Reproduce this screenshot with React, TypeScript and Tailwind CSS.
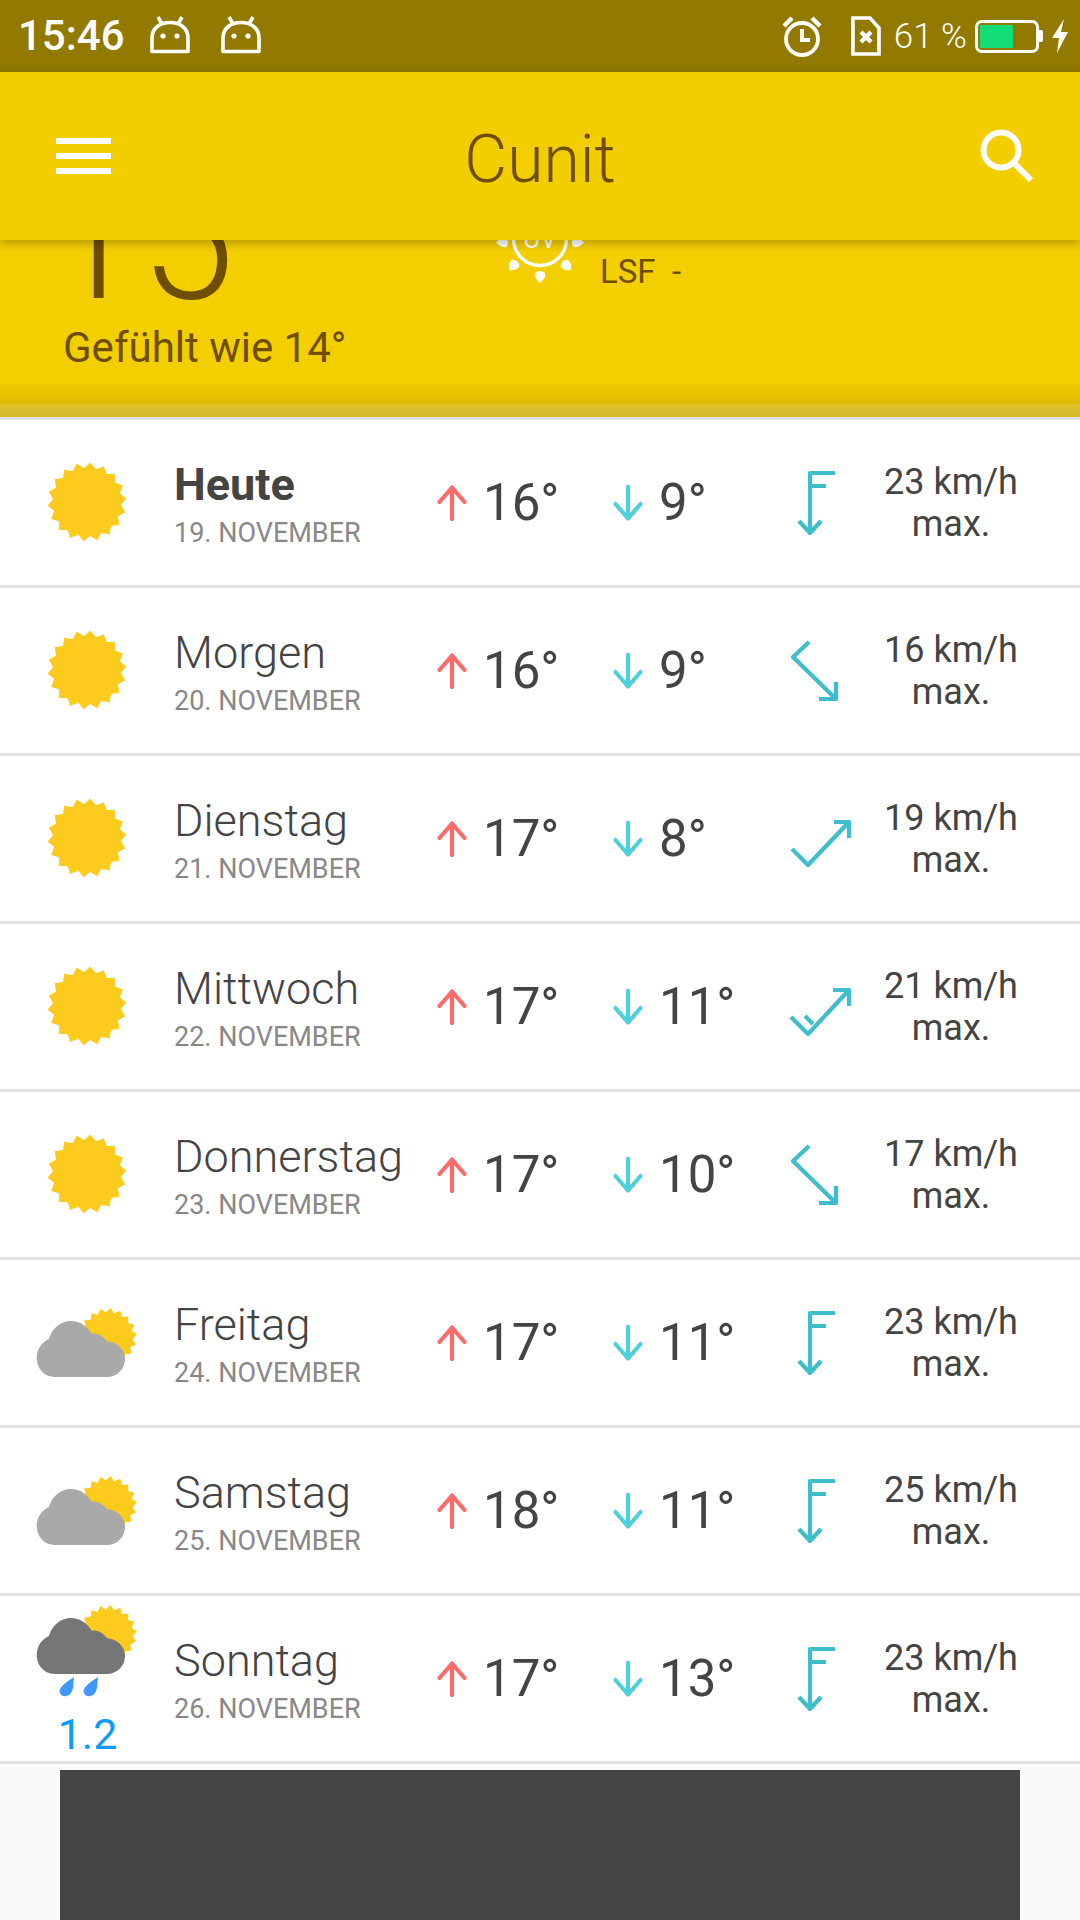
import React from 'react';

const SUN_RAYS = 18;

// spiky sun disc, centred on cx/cy
function sunPoints(cx: number, cy: number, outer: number, inner: number) {
  const pts: string[] = [];
  for (let i = 0; i < SUN_RAYS * 2; i++) {
    const r = i % 2 === 0 ? outer : inner;
    const a = ((-85 + (i * 180) / SUN_RAYS) * Math.PI) / 180;
    pts.push(`${(cx + r * Math.cos(a)).toFixed(1)},${(cy + r * Math.sin(a)).toFixed(1)}`);
  }
  return pts.join(' ');
}

const CLOUD = 'M55 84 C44 84 36.7 75 36.7 65 C36.7 56 42 49 49 46 C52 35 61 28 71 28 C80 28 87 33 91.7 40.7 C98 40 103 43 106.7 48 C117 49 125 56 125 66 C125 76 117 84 107 84 Z';

const CloudWithSun: React.FC<{ color: string; height: number; className?: string }> = ({ color, height, className }) => (
  <svg width="175" height={height} viewBox={`0 10 175 ${height}`} className={className}>
    <clipPath id="sun-cut">
      <rect x="0" y="0" width="175" height="68" />
    </clipPath>
    <polygon points={sunPoints(108, 44, 29, 24.5)} fill="#fdca1e" clipPath="url(#sun-cut)" />
    <path d={CLOUD} fill={color} />
  </svg>
);

const WeatherIcon: React.FC<{ kind: 'sun' | 'cloudy' | 'rain'; rain?: string }> = ({ kind, rain }) => {
  if (kind === 'sun') {
    return (
      <svg width="80" height="80" viewBox="0 0 80 80" className="ml-[47px] -mt-[2px]">
        <polygon points={sunPoints(40, 40, 39.5, 34)} fill="#fdca1e" />
      </svg>
    );
  }
  if (kind === 'cloudy') {
    return <CloudWithSun color="#a9a9a9" height={90} className="mt-[10px]" />;
  }
  return (
    <div className="h-[165px] pt-[4px] flex flex-col items-center">
      <CloudWithSun color="#757678" height={76} />
      <svg width="175" height="20" viewBox="0 0 175 20" className="mt-[1px] shrink-0">
        <path d="M74 0 C73 7 74 10 72 14 C70 20 62 21 60 16 C58 12 63 7 74 0 Z" fill="#3f97f6" />
        <path d="M98 0 C97 7 98 10 96 14 C94 20 86 21 84 16 C82 12 87 7 98 0 Z" fill="#3f97f6" />
      </svg>
      <span className="mt-[14px] text-[43px] leading-[46px] text-[#0d9bfb]">{rain}</span>
    </div>
  );
};

// temperature arrow
const TempArrow: React.FC<{ up?: boolean }> = ({ up }) => (
  <svg width="30" height="36" viewBox="0 0 30 36" fill="none" stroke={up ? '#fb6a68' : '#4fcfdc'} strokeWidth="4.2" strokeLinecap="round" strokeLinejoin="round" className="shrink-0">
    {up ? <path d="M15 34 V2.5 M2.5 17 L15 2.5 L27.5 17" /> : <path d="M15 2 V33.5 M2.5 19 L15 33.5 L27.5 19" />}
  </svg>
);

// wind barbs by direction, second tick on the stronger one
const WIND_BARBS: Record<string, React.ReactNode> = {
  south: <path d="M22 66 V5 H47 M22 18 H38 M11 53 L22 65 L33 53" />,
  southeast: <path d="M21 6 L5 21 L48 63 M48 46 V63 H31" />,
  northeast: <path d="M4 45 L20 61 L61 18 M46 18 H61 V34" />,
  northeastTick: <path d="M3 45 L20 62 L61 18 M45 18 H61 V34 M17 44 L25 52" />,
};

const WindIcon: React.FC<{ dir: string }> = ({ dir }) => (
  <svg width="70" height="70" viewBox="0 0 70 70" fill="none" stroke="#3ebdcb" strokeWidth="4.2" strokeLinejoin="round" className="shrink-0">
    {WIND_BARBS[dir]}
  </svg>
);

const days = [
  { name: 'Heute', date: '19. NOVEMBER', hi: '16°', lo: '9°', wind: '23 km/h', dir: 'south', icon: 'sun', bold: true },
  { name: 'Morgen', date: '20. NOVEMBER', hi: '16°', lo: '9°', wind: '16 km/h', dir: 'southeast', icon: 'sun' },
  { name: 'Dienstag', date: '21. NOVEMBER', hi: '17°', lo: '8°', wind: '19 km/h', dir: 'northeast', icon: 'sun' },
  { name: 'Mittwoch', date: '22. NOVEMBER', hi: '17°', lo: '11°', wind: '21 km/h', dir: 'northeastTick', icon: 'sun' },
  { name: 'Donnerstag', date: '23. NOVEMBER', hi: '17°', lo: '10°', wind: '17 km/h', dir: 'southeast', icon: 'sun' },
  { name: 'Freitag', date: '24. NOVEMBER', hi: '17°', lo: '11°', wind: '23 km/h', dir: 'south', icon: 'cloudy' },
  { name: 'Samstag', date: '25. NOVEMBER', hi: '18°', lo: '11°', wind: '25 km/h', dir: 'south', icon: 'cloudy' },
  { name: 'Sonntag', date: '26. NOVEMBER', hi: '17°', lo: '13°', wind: '23 km/h', dir: 'south', icon: 'rain', rain: '1.2' },
] as const;

const AndroidGlyph = () => (
  <svg width="40" height="38" viewBox="0 0 40 38" fill="none" stroke="#fff" strokeWidth="3.6" className="-mt-[3px]">
    <path d="M2 35.5 V22 C2 12 10 6.5 20 6.5 C30 6.5 38 12 38 22 V35.5 Z" strokeLinejoin="round" />
    <path d="M8 1 L12 8 M32 1 L28 8" />
    <circle cx="13" cy="20" r="2.6" fill="#fff" stroke="none" />
    <circle cx="27" cy="20" r="2.6" fill="#fff" stroke="none" />
  </svg>
);

// one petal of the UV sun, drawn at the bottom and turned round the disc
const UV_RAYS = [0, 45, -45, 85, -85];

export default function App() {
  return (
    <div className="w-[1080px] h-[1920px] overflow-hidden bg-[#fafafa] flex flex-col font-['Roboto',sans-serif]">
      {/* status bar */}
      <div className="h-[72px] bg-[#927a00] flex items-center text-white shrink-0">
        <span className="ml-[18px] text-[42px] font-medium leading-none">15:46</span>
        <div className="ml-[25px] flex gap-[31px]">
          <AndroidGlyph />
          <AndroidGlyph />
        </div>
        <div className="ml-auto flex items-center">
          <svg width="40" height="42" viewBox="0 0 40 42" fill="none" stroke="#fff" strokeWidth="3.8">
            <circle cx="20" cy="24" r="16" />
            <path d="M20 14 V25 H28" strokeWidth="4" />
            <path d="M2 11 L10 3 M38 11 L30 3" strokeWidth="4.5" />
          </svg>
          <svg width="30" height="40" viewBox="0 0 30 40" fill="none" stroke="#fff" strokeWidth="3.6" className="ml-[29px]">
            <path d="M2 2 H19 L28 12 V38 H2 Z" />
            <path d="M10 16 L20 26 M20 16 L10 26" strokeWidth="4.4" />
          </svg>
          <span className="ml-[13px] text-[35px] font-light leading-none">61 %</span>
          <div className="ml-[8px] w-[64px] h-[33px] rounded-[7px] border-[3px] border-white p-[2px] flex">
            <div className="w-[33px] bg-[#13dd77]" />
          </div>
          <div className="w-[4px] h-[12px] bg-white rounded-r-[2px]" />
          <svg width="18" height="34" viewBox="0 0 18 34" className="ml-[8px] mr-[11px]">
            <path d="M13 0 L1 19 H8 L6 34 L17 13 H10 Z" fill="#fff" />
          </svg>
        </div>
      </div>

      {/* toolbar */}
      <div className="relative z-10 h-[168px] shrink-0 bg-[#f2cd00] shadow-[0_3px_10px_rgba(0,0,0,0.28)] grid grid-cols-[1fr_auto_1fr] items-center px-[46px]">
        <div className="ml-[10px] w-[55px] flex flex-col gap-[9px]">
          <div className="h-[6px] bg-white" />
          <div className="h-[6px] bg-white" />
          <div className="h-[6px] bg-white" />
        </div>
        <span className="text-[66px] font-light text-[#6f4e00] leading-none mt-[8px]">Cunit</span>
        <svg width="54" height="54" viewBox="0 0 54 54" fill="none" stroke="#fff" strokeWidth="6" className="justify-self-end">
          <circle cx="21" cy="21" r="17.5" />
          <path d="M33 33 L51 51" />
        </svg>
      </div>

      {/* current conditions, top runs under the toolbar */}
      <div className="h-[177px] shrink-0 overflow-hidden flex items-end bg-[linear-gradient(to_bottom,#f4cf00_0px,#f4cf00_140px,#dcb900_164px,#e0c22c_164px,#d4b92c_177px)]">
        <div className="w-[490px] shrink-0 pl-[63px] pb-[46px] text-[#6f4e00]">
          <div className="text-[170px] font-light leading-[170px] -ml-[17px]">15</div>
          <div className="text-[42px] leading-[46px]">Gefühlt wie 14°</div>
        </div>
        <div className="flex items-end pb-[132px]">
          <svg width="100" height="100" viewBox="0 0 100 100" fill="none" stroke="#fff" strokeWidth="3.4" className="shrink-0">
            <circle cx="50" cy="54" r="26.5" />
            <text x="50" y="63" textAnchor="middle" fontSize="26" fill="#fff" stroke="none">UV</text>
            {UV_RAYS.map((deg) => (
              <path key={deg} d="M45 88 Q50 84 55 88 Q56 93 50 98 Q44 93 45 88 Z" fill="#fff" stroke="none" transform={`rotate(${deg} 50 54)`} />
            ))}
          </svg>
          <span className="ml-[10px] -mb-[7px] text-[33px] leading-[40px] text-[#6f4e00] whitespace-pre">LSF  -</span>
        </div>
      </div>

      {/* daily forecast */}
      <div className="bg-white shrink-0 border-t-[3px] border-[#e0e0e0]">
        {days.map((d) => (
          <div key={d.name} className="h-[168px] border-b-[3px] border-[#e0e0e0] flex items-center text-[#444444]">
            <div className="w-[175px] shrink-0">
              <WeatherIcon kind={d.icon} rain={'rain' in d ? d.rain : undefined} />
            </div>
            <div className="w-[263px] shrink-0 mt-[3px] -ml-[1px] pr-[2px]">
              <div className={`text-[45px] leading-[50px] ${'bold' in d ? 'font-bold' : 'font-light'}`}>{d.name}</div>
              <div className="mt-[8px] text-[27px] leading-[30px] text-[#888888]">{d.date}</div>
            </div>
            <div className="w-[176px] shrink-0 flex items-center gap-[16px]">
              <TempArrow up />
              <span className="text-[51px] leading-none">{d.hi}</span>
            </div>
            <div className="w-[175px] shrink-0 flex items-center gap-[16px]">
              <TempArrow />
              <span className="text-[51px] leading-none">{d.lo}</span>
            </div>
            <WindIcon dir={d.dir} />
            <div className="flex-1 text-center text-[36px] leading-[42px] pr-[36px]">
              {d.wind}
              <br />
              max.
            </div>
          </div>
        ))}
      </div>

      {/* ad slot */}
      <div className="flex-1 px-[60px] pt-[6px]">
        <div className="h-full bg-[#444444]" />
      </div>
    </div>
  );
}
